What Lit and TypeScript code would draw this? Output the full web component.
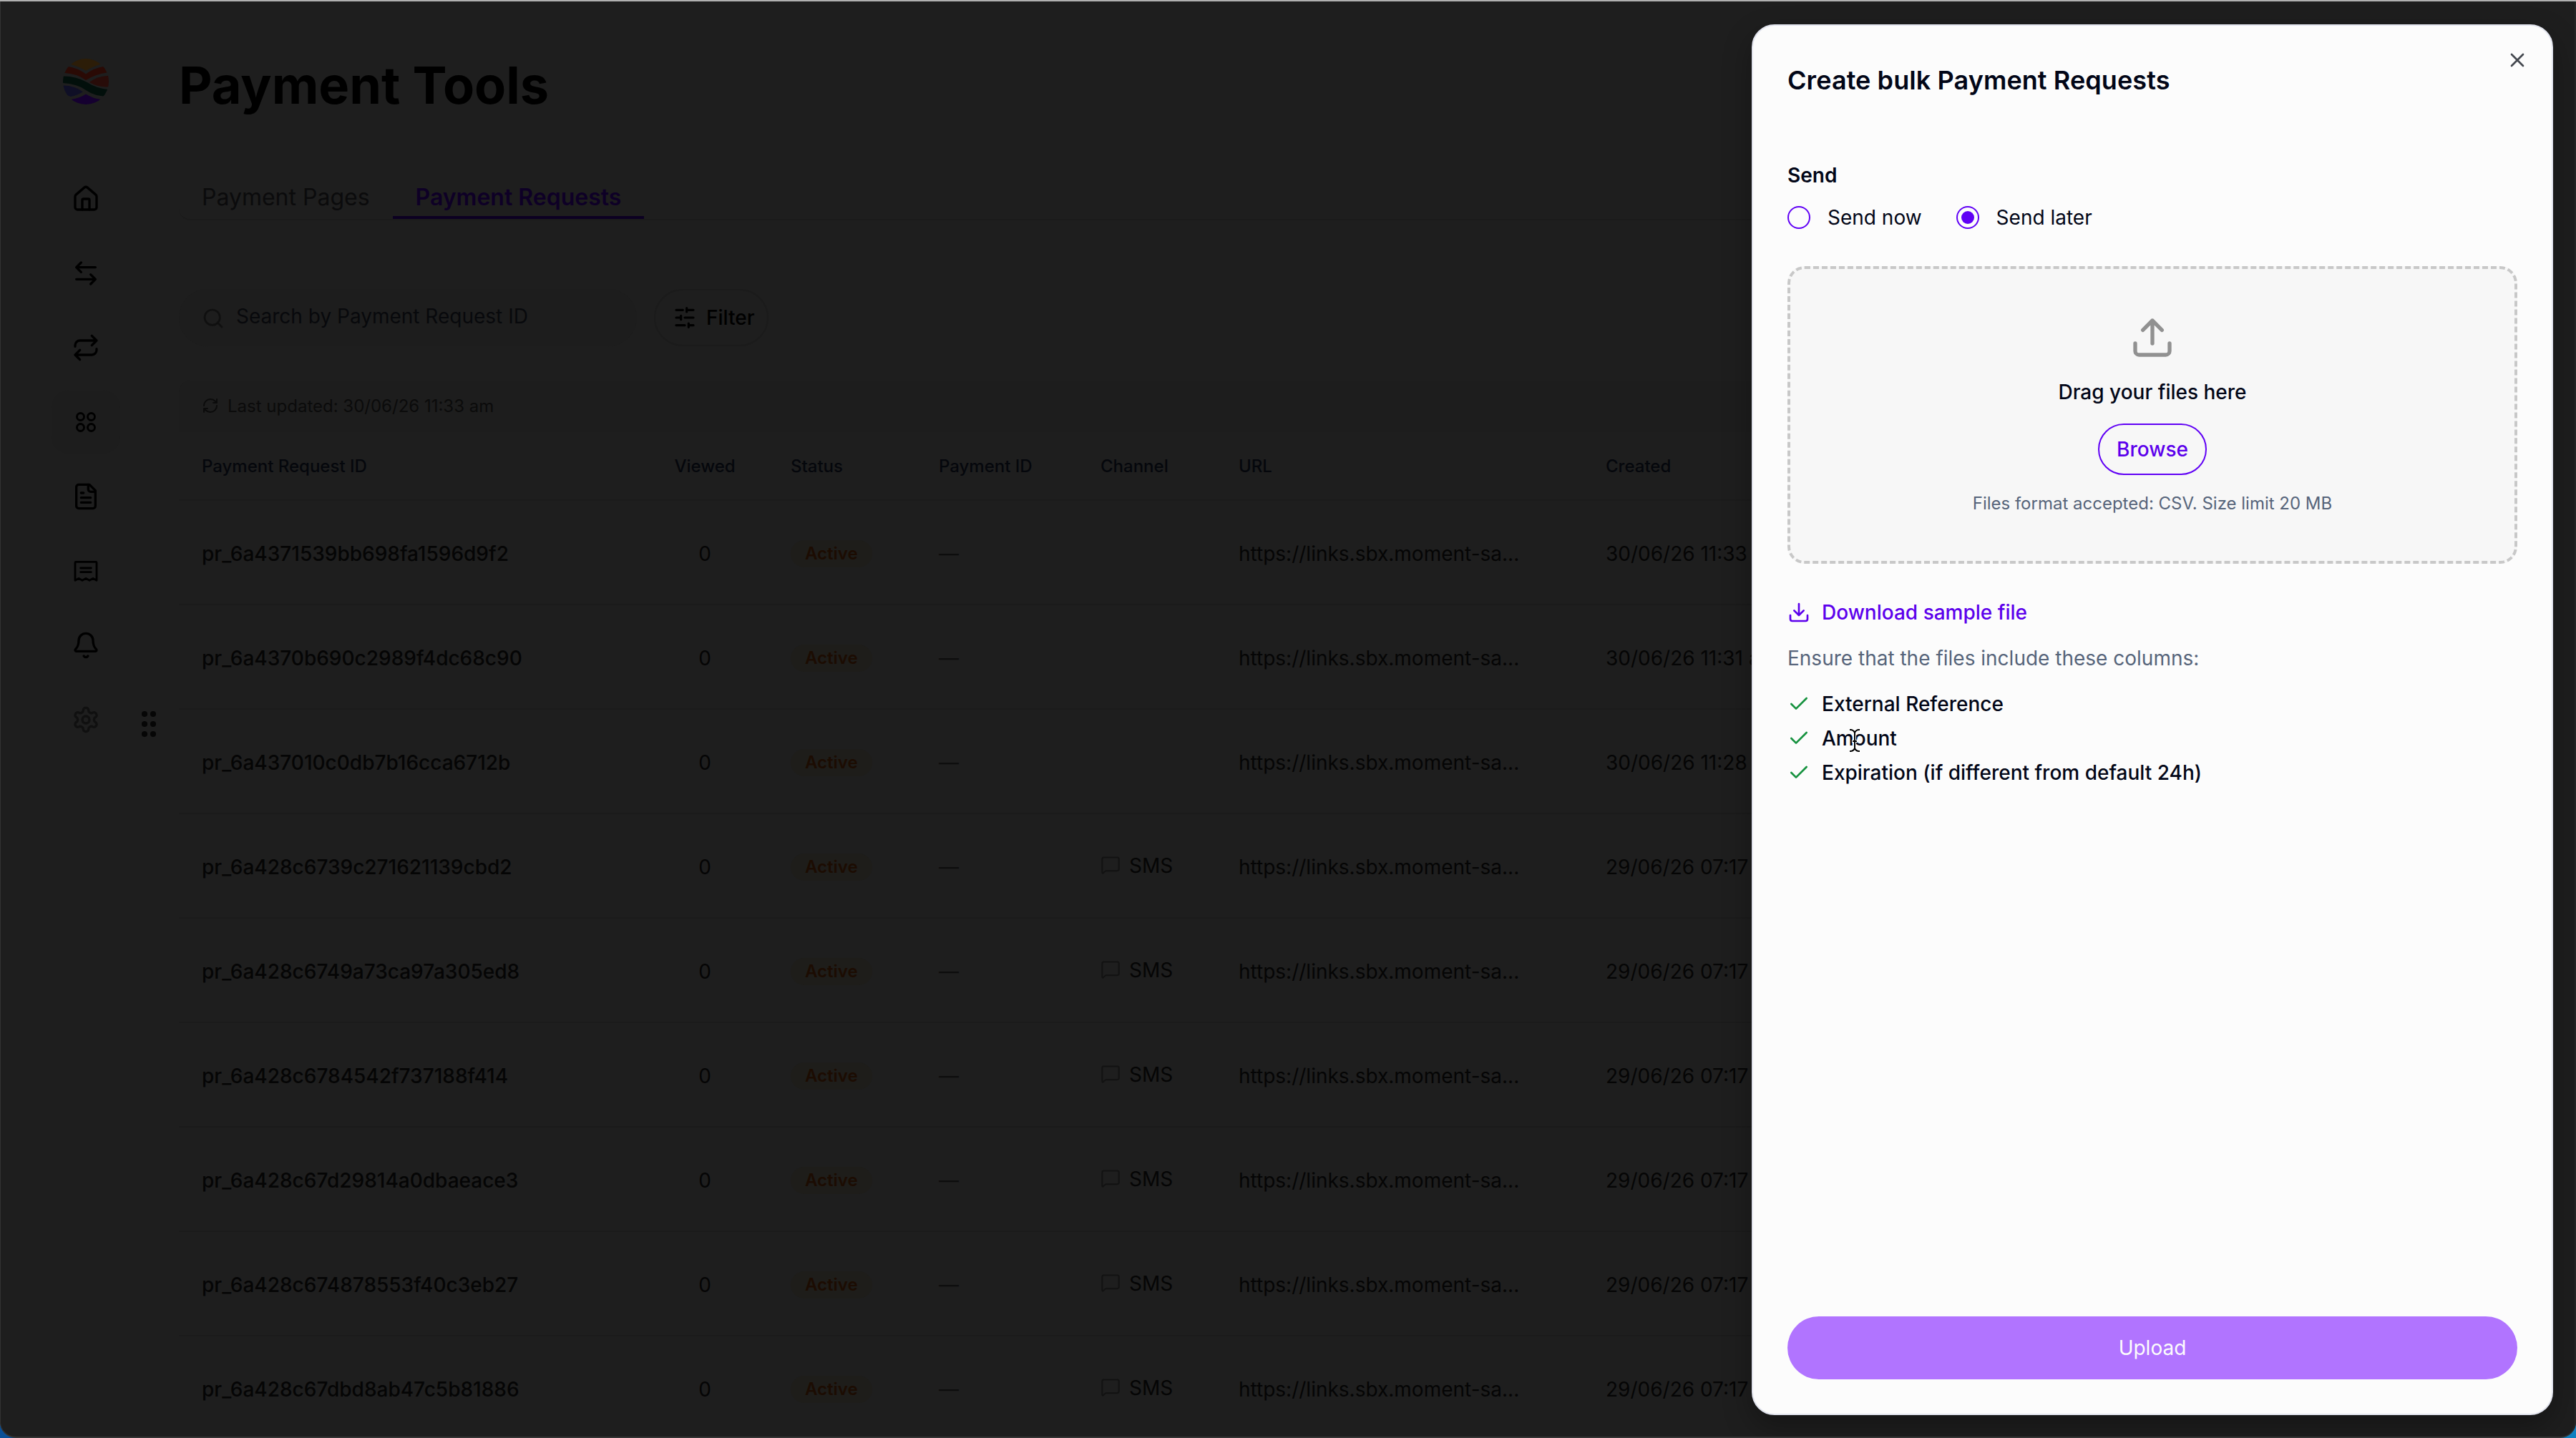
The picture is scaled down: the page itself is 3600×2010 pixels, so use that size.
import { LitElement, html, css, svg } from 'lit';
import { customElement, property } from 'lit/decorators.js';

// Stroke icons, all drawn on a 24x24 grid.
const ICONS: Record<string, ReturnType<typeof svg>> = {
  home: svg`<path d="M15 21v-8a1 1 0 0 0-1-1h-4a1 1 0 0 0-1 1v8" /><path d="M3 10a2 2 0 0 1 .709-1.528l7-5.999a2 2 0 0 1 2.582 0l7 5.999A2 2 0 0 1 21 10v9a2 2 0 0 1-2 2H5a2 2 0 0 1-2-2z" />`,
  transfer: svg`<path d="M8 3 4 7l4 4M4 7h16M16 21l4-4-4-4M20 17H4" />`,
  repeat: svg`<path d="m17 2 4 4-4 4M3 11v-1a4 4 0 0 1 4-4h14M7 22l-4-4 4-4M21 13v1a4 4 0 0 1-4 4H3" />`,
  apps: svg`<circle cx="7.5" cy="7.5" r="3" /><circle cx="16.5" cy="7.5" r="3" /><circle cx="7.5" cy="16.5" r="3" /><circle cx="16.5" cy="16.5" r="3" />`,
  file: svg`<path d="M15 2H6a2 2 0 0 0-2 2v16a2 2 0 0 0 2 2h12a2 2 0 0 0 2-2V7Z" /><path d="M14 2v4a2 2 0 0 0 2 2h4M10 9H8M16 13H8M16 17H8" />`,
  receipt: svg`<path d="M3 20V5a.6.6 0 0 1 .6-.6h16.8a.6.6 0 0 1 .6.6v15l-3-1.7-3 1.7-3-1.7-3 1.7-3-1.7zM7.6 9.6h8.8M7.6 13h8.8" />`,
  bell: svg`<path d="M10.268 21a2 2 0 0 0 3.464 0" /><path d="M3.262 15.326A1 1 0 0 0 4 17h16a1 1 0 0 0 .74-1.673C19.41 13.956 18 12.499 18 8A6 6 0 0 0 6 8c0 4.499-1.411 5.956-2.738 7.326" />`,
  settings: svg`<path d="M12.22 2h-.44a2 2 0 0 0-2 2v.18a2 2 0 0 1-1 1.73l-.43.25a2 2 0 0 1-2 0l-.15-.08a2 2 0 0 0-2.73.73l-.22.38a2 2 0 0 0 .73 2.73l.15.1a2 2 0 0 1 1 1.72v.51a2 2 0 0 1-1 1.74l-.15.09a2 2 0 0 0-.73 2.73l.22.38a2 2 0 0 0 2.73.73l.15-.08a2 2 0 0 1 2 0l.43.25a2 2 0 0 1 1 1.73V20a2 2 0 0 0 2 2h.44a2 2 0 0 0 2-2v-.18a2 2 0 0 1 1-1.73l.43-.25a2 2 0 0 1 2 0l.15.08a2 2 0 0 0 2.73-.73l.22-.39a2 2 0 0 0-.73-2.73l-.15-.08a2 2 0 0 1-1-1.74v-.5a2 2 0 0 1 1-1.74l.15-.09a2 2 0 0 0 .73-2.73l-.22-.38a2 2 0 0 0-2.73-.73l-.15.08a2 2 0 0 1-2 0l-.43-.25a2 2 0 0 1-1-1.73V4a2 2 0 0 0-2-2z" /><circle cx="12" cy="12" r="3" />`,
  search: svg`<circle cx="11" cy="11" r="8" /><path d="m21 21-4.3-4.3" />`,
  filter: svg`<path d="M21 4h-7M10 4H3M21 12h-9M8 12H3M21 20h-5M12 20H3M14 2v4M8 10v4M16 18v4" />`,
  refresh: svg`<path d="M3 12a9 9 0 0 1 9-9 9.75 9.75 0 0 1 6.74 2.74L21 8M21 3v5h-5M21 12a9 9 0 0 1-9 9 9.75 9.75 0 0 1-6.74-2.74L3 16M8 16H3v5" />`,
  message: svg`<path d="M22 17a2 2 0 0 1-2 2H6.828a2 2 0 0 0-1.414.586l-2.202 2.202A.71.71 0 0 1 2 21.286V5a2 2 0 0 1 2-2h16a2 2 0 0 1 2 2z" />`,
  upload: svg`<path d="M21 15v4a2 2 0 0 1-2 2H5a2 2 0 0 1-2-2v-4M17 8l-5-5-5 5M12 3v12" />`,
  download: svg`<path d="M21 15v4a2 2 0 0 1-2 2H5a2 2 0 0 1-2-2v-4M7 10l5 5 5-5M12 15V3" />`,
  check: svg`<path d="M20 6 9 17l-5-5" />`,
  close: svg`<path d="M18 6 6 18M6 6l12 12" />`,
};

@customElement('ui-icon')
export class UiIcon extends LitElement {
  static styles = css`
    :host {
      display: inline-flex;
      flex: none;
    }
    svg {
      display: block;
      fill: none;
      stroke: currentColor;
      stroke-linecap: round;
      stroke-linejoin: round;
    }
  `;

  @property({ type: String })
  name: string = '';

  @property({ type: Number })
  size: number = 32;

  @property({ type: Number })
  stroke: number = 2;

  render() {
    return html`
      <svg width="${this.size}" height="${this.size}" viewBox="0 0 24 24" stroke-width="${this.stroke}">
        ${ICONS[this.name]}
      </svg>
    `;
  }
}

@customElement('app-sidebar')
export class AppSidebar extends LitElement {
  static styles = css`
    :host {
      display: flex;
      width: 250px;
      flex: none;
    }
    .rail {
      display: flex;
      flex-direction: column;
      align-items: center;
      width: 96px;
      margin-left: 72px;
      padding-top: 81px;
    }
    .logo {
      display: block;
      width: 66px;
      height: 66px;
    }
    nav {
      display: flex;
      flex-direction: column;
      gap: 16px;
      margin-top: 87px;
    }
    .item {
      display: flex;
      align-items: center;
      justify-content: center;
      width: 96px;
      height: 88px;
      border-radius: 24px;
      color: #000;
    }
    .item.active {
      background: #1d1d1d;
    }
    .item.muted {
      color: #101010;
    }
    .grip {
      display: grid;
      grid-template-columns: 8px 8px;
      gap: 6px 4px;
      margin: 994px 0 0 30px;
      align-content: start;
    }
    .dot {
      width: 8px;
      height: 8px;
      border-radius: 50%;
      background: #060606;
    }
  `;

  private _items = ['home', 'transfer', 'repeat', 'apps', 'file', 'receipt', 'bell', 'settings'];

  private _itemClass(name: string) {
    if (name === 'apps') return 'item active';
    return name === 'settings' ? 'item muted' : 'item';
  }

  render() {
    return html`
      <div class="rail">
        <svg class="logo" viewBox="50 50 200 200">
          <clipPath id="disc"><circle cx="150" cy="150" r="97" /></clipPath>
          <g clip-path="url(#disc)">
            <path fill="#2c1d08" d="M80 50H220V72L209 77Q175 88 150 104Q125 88 90 78L80 70Z" />
            <path fill="#2a0a05" d="M60 80L75 86Q115 92 150 118Q185 92 224 86L240 80L243 111Q190 118 150 144Q110 115 50 113Z" />
            <path fill="#020f0b" d="M50 127Q110 127 155 153Q195 180 250 184V213Q190 214 150 186Q110 158 50 156Z" />
            <path fill="#280c09" d="M165 153Q195 128 250 125V172Q205 176 165 153Z" />
            <path fill="#0f0f26" d="M50 167Q100 166 137 193Q115 208 85 214L50 200Z" />
            <path fill="#150030" d="M88 226Q125 220 150 203Q180 222 214 226V250H88Z" />
          </g>
        </svg>
        <nav>
          ${this._items.map(
            (name) => html`
              <div class="${this._itemClass(name)}">
                <ui-icon name="${name}" size="40" stroke="${name === 'receipt' || name === 'apps' ? 1.7 : 2}"></ui-icon>
              </div>
            `
          )}
        </nav>
      </div>
      <div class="grip">${[0, 1, 2, 3, 4, 5].map(() => html`<span class="dot"></span>`)}</div>
    `;
  }
}

interface PaymentRequest {
  id: string;
  sms: boolean;
  created: string;
}

const REQUESTS: PaymentRequest[] = [
  { id: 'pr_6a4371539bb698fa1596d9f2', sms: false, created: '30/06/26 11:33 am' },
  { id: 'pr_6a4370b690c2989f4dc68c90', sms: false, created: '30/06/26 11:31 am' },
  { id: 'pr_6a437010c0db7b16cca6712b', sms: false, created: '30/06/26 11:28 am' },
  { id: 'pr_6a428c6739c271621139cbd2', sms: true, created: '29/06/26 07:17 pm' },
  { id: 'pr_6a428c6749a73ca97a305ed8', sms: true, created: '29/06/26 07:17 pm' },
  { id: 'pr_6a428c6784542f737188f414', sms: true, created: '29/06/26 07:17 pm' },
  { id: 'pr_6a428c67d29814a0dbaeace3', sms: true, created: '29/06/26 07:17 pm' },
  { id: 'pr_6a428c674878553f40c3eb27', sms: true, created: '29/06/26 07:17 pm' },
  { id: 'pr_6a428c67dbd8ab47c5b81886', sms: true, created: '29/06/26 07:17 pm' },
];

@customElement('payment-requests')
export class PaymentRequests extends LitElement {
  static styles = css`
    :host {
      display: block;
      flex: 1;
      padding: 79px 48px 0 0;
      font-size: 28px;
      color: #050505;
    }
    h1 {
      margin: 0;
      font-size: 72px;
      line-height: 80px;
      font-weight: 700;
      color: #000;
    }
    .tabs {
      display: flex;
      height: 62px;
      margin-top: 85px;
      border-bottom: 2px solid #1b1b1b;
      border-bottom-left-radius: 16px;
    }
    .tab {
      display: flex;
      align-items: center;
      box-sizing: border-box;
      padding: 5px 32px 0;
      border-bottom: 4px solid transparent;
      font-size: 32px;
      color: #0b0b0c;
    }
    .tab.active {
      border-color: #0c0022;
      font-weight: 600;
      color: #0e0026;
    }
    .toolbar {
      display: flex;
      gap: 24px;
      margin-top: 96px;
    }
    .search,
    .filter {
      display: flex;
      align-items: center;
      box-sizing: border-box;
      height: 80px;
      border-radius: 40px;
    }
    .search {
      width: 640px;
      gap: 16px;
      padding: 0 0 4px 32px;
      background: #1d1d1d;
      color: #08090c;
    }
    .search ui-icon {
      padding-top: 5px;
      color: #101010;
    }
    .filter {
      gap: 14px;
      padding: 0 17px 0 25px;
      border: 2px solid #1b1b1b;
      font-weight: 500;
      color: #000;
    }
    .updated {
      display: flex;
      align-items: center;
      gap: 12px;
      box-sizing: border-box;
      height: 72px;
      margin-top: 48px;
      padding: 0 0 2px 32px;
      border-radius: 16px 16px 0 0;
      background: #1d1d1d;
      font-size: 24px;
      color: #0b0b0b;
    }
    .row {
      display: grid;
      grid-template-columns: 654px 169px 207px 226px 193px 513px 1fr;
      align-items: center;
      box-sizing: border-box;
      height: 146px;
      padding: 3px 0 0 32px;
      border-bottom: 2px solid #1b1b1b;
      white-space: nowrap;
    }
    .row.head {
      height: 96px;
      padding-top: 0;
      font-size: 24px;
      font-weight: 500;
      color: #05070c;
    }
    .id {
      font-weight: 500;
    }
    .viewed {
      padding-right: 71px;
      text-align: center;
    }
    .chip {
      display: inline-block;
      padding: 0 20px;
      border-radius: 19px;
      background: #1e1d1a;
      font-size: 24px;
      line-height: 38px;
      font-weight: 600;
      color: #1c0c02;
      vertical-align: middle;
    }
    .dash {
      color: #0d0d0d;
    }
    .channel {
      display: flex;
      align-items: center;
      gap: 12px;
      padding-bottom: 4px;
    }
    .channel ui-icon {
      padding-bottom: 2px;
      color: #121212;
    }
  `;

  render() {
    return html`
      <h1>Payment Tools</h1>
      <div class="tabs">
        <div class="tab">Payment Pages</div>
        <div class="tab active">Payment Requests</div>
      </div>
      <div class="toolbar">
        <div class="search"><ui-icon name="search" size="32"></ui-icon>Search by Payment Request ID</div>
        <div class="filter"><ui-icon name="filter" size="32" stroke="2.4"></ui-icon>Filter</div>
      </div>
      <div class="updated"><ui-icon name="refresh" size="24"></ui-icon>Last updated: 30/06/26 11:33 am</div>
      <div class="row head">
        <span>Payment Request ID</span>
        <span class="viewed">Viewed</span>
        <span>Status</span>
        <span>Payment ID</span>
        <span>Channel</span>
        <span>URL</span>
        <span>Created</span>
      </div>
      ${REQUESTS.map(
        (request) => html`
          <div class="row">
            <span class="id">${request.id}</span>
            <span class="viewed">0</span>
            <span><span class="chip">Active</span></span>
            <span class="dash">—</span>
            <span class="channel">
              ${request.sms ? html`<ui-icon name="message" size="28" stroke="1.7"></ui-icon>SMS` : ''}
            </span>
            <span>https://links.sbx.moment-sa...</span>
            <span>${request.created}</span>
          </div>
        `
      )}
    `;
  }
}

@customElement('bulk-drawer')
export class BulkDrawer extends LitElement {
  static styles = css`
    :host {
      display: flex;
      flex-direction: column;
      box-sizing: border-box;
      padding: 54px 48px 48px;
      border: 2px solid #e2e4ee;
      border-radius: 32px;
      background: #fcfcfc;
      box-shadow: 0 16px 40px rgba(0, 0, 0, 0.3);
      font-size: 28px;
      line-height: 40px;
      color: #020617;
    }
    .close {
      position: absolute;
      top: 32px;
      right: 32px;
      color: #44484f;
    }
    h2 {
      margin: 0;
      font-size: 36px;
      line-height: 44px;
      font-weight: 600;
      letter-spacing: 0.08px;
    }
    .label {
      margin-top: 91px;
      font-weight: 600;
    }
    .options {
      display: flex;
      gap: 48px;
      margin-top: 19px;
    }
    .option {
      display: flex;
      align-items: center;
      gap: 24px;
    }
    .radio {
      display: flex;
      align-items: center;
      justify-content: center;
      box-sizing: border-box;
      width: 32px;
      height: 32px;
      border: 2px solid #6000f5;
      border-radius: 50%;
    }
    .radio.checked::after {
      content: '';
      width: 18px;
      height: 18px;
      border-radius: 50%;
      background: #6000f5;
    }
    .dropzone {
      display: flex;
      flex-direction: column;
      align-items: center;
      box-sizing: border-box;
      height: 416px;
      margin-top: 48px;
      padding-top: 64px;
      border: 4px dashed #c8c8c8;
      border-radius: 24px;
      background: #f7f7f7;
    }
    .dropzone ui-icon {
      color: #919191;
    }
    .drag {
      margin-top: 24px;
      font-weight: 500;
    }
    .browse {
      box-sizing: border-box;
      width: 152px;
      height: 72px;
      margin-top: 24px;
      border: 2px solid #6000f5;
      border-radius: 36px;
      line-height: 68px;
      font-weight: 500;
      text-align: center;
      color: #5c00ec;
    }
    .hint {
      margin-top: 24px;
      font-size: 24px;
      line-height: 32px;
      color: #56647a;
    }
    .download {
      display: flex;
      align-items: center;
      gap: 16px;
      margin-top: 48px;
      font-weight: 500;
      color: #5c00ec;
    }
    .ensure {
      margin-top: 24px;
      color: #56647a;
    }
    ul {
      margin: 20px 0 0;
      padding: 0;
      list-style: none;
    }
    li {
      display: flex;
      align-items: center;
      gap: 16px;
      line-height: 48px;
      font-weight: 500;
    }
    li ui-icon {
      color: #16923f;
    }
    .upload {
      margin-top: auto;
      border-radius: 44px;
      background: #b174ff;
      line-height: 88px;
      text-align: center;
      color: #fcfcfc;
    }
  `;

  private _columns = ['External Reference', 'Amount', 'Expiration (if different from default 24h)'];

  render() {
    return html`
      <ui-icon class="close" name="close" size="32"></ui-icon>
      <h2>Create bulk Payment Requests</h2>
      <div class="label">Send</div>
      <div class="options">
        <div class="option"><span class="radio"></span>Send now</div>
        <div class="option"><span class="radio checked"></span>Send later</div>
      </div>
      <div class="dropzone">
        <ui-icon name="upload" size="64"></ui-icon>
        <div class="drag">Drag your files here</div>
        <div class="browse">Browse</div>
        <div class="hint">Files format accepted: CSV. Size limit 20 MB</div>
      </div>
      <div class="download"><ui-icon name="download" size="32"></ui-icon>Download sample file</div>
      <div class="ensure">Ensure that the files include these columns:</div>
      <ul>
        ${this._columns.map((column) => html`<li><ui-icon name="check" size="32"></ui-icon>${column}</li>`)}
      </ul>
      <div class="upload">Upload</div>
    `;
  }
}

@customElement('app-root')
export class AppRoot extends LitElement {
  static styles = css`
    :host {
      display: block;
      width: 3600px;
      height: 2010px;
      overflow: hidden;
      background: linear-gradient(90deg, #0a4f96, #1080c0);
      font-family: Inter, 'Liberation Sans', sans-serif;
      font-optical-sizing: none;
    }
    .window {
      position: relative;
      display: flex;
      box-sizing: border-box;
      height: 2010px;
      overflow: hidden;
      border-bottom: 2px solid #353535;
      border-radius: 0 0 22px 22px;
      background: #1e1e1e;
      box-shadow: inset 0 2px #b0b0b0, inset 1px 0 #333, inset -2px 0 #262626;
    }
    .drawer {
      position: absolute;
      top: 34px;
      right: 32px;
      width: 1120px;
      height: 1944px;
    }
    .cursor {
      position: absolute;
      left: 2582px;
      top: 1016px;
      width: 20px;
      height: 38px;
      fill: none;
      stroke-linecap: square;
    }
  `;

  render() {
    const beam = 'M4 4q4 0 6 4q2-4 6-4M10 8v22M4 34q4 0 6-4q2 4 6 4M8 20h4';
    return html`
      <div class="window">
        <app-sidebar></app-sidebar>
        <payment-requests></payment-requests>
        <bulk-drawer class="drawer"></bulk-drawer>
        <svg class="cursor" viewBox="0 0 20 38">
          <path d="${beam}" stroke="#fff" stroke-width="4" />
          <path d="${beam}" stroke="#000" stroke-width="2" />
        </svg>
      </div>
    `;
  }
}
